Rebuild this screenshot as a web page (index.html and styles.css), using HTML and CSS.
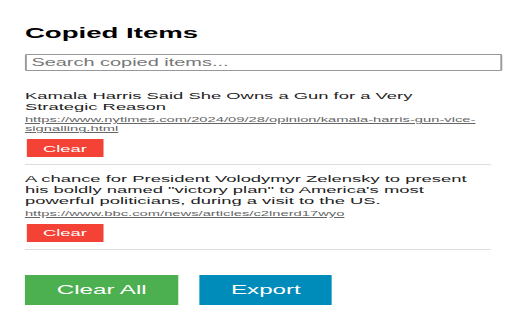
FILE: index.html
```html
<!DOCTYPE html>
<html lang="en">

<head>
    <meta charset="UTF-8">
    <meta name="viewport" content="width=device-width, initial-scale=1.0">
    <title>Copied Items</title>
    <link rel="stylesheet" href="styles.css">
</head>

<body>
    <div class="popup">
        <h2>Copied Items</h2>
        <input type="text" class="search" placeholder="Search copied items...">

        <div class="item-list">
            <div class="item">
                <div class="item-title">Kamala Harris Said She Owns a Gun for a Very Strategic Reason</div>
                <a class="item-url" href="#">https://www.nytimes.com/2024/09/28/opinion/kamala-harris-gun-vice-signalling.html</a>
                <button class="clear-btn">Clear</button>
            </div>
            <div class="item">
                <div class="item-title">A chance for President Volodymyr Zelensky to present his boldly named "victory plan" to America's most powerful politicians, during a visit to the US.</div>
                <a class="item-url" href="#">https://www.bbc.com/news/articles/c2lnerd17wyo</a>
                <button class="clear-btn">Clear</button>
            </div>
        </div>

        <div class="actions">
            <button class="action-btn clear-all">Clear All</button>
            <button class="action-btn export">Export</button>
        </div>
    </div>
</body>

</html>
```

FILE: styles.css
```css
* {
    box-sizing: border-box;
}

html,
body {
    margin: 0;
    padding: 0;
    overflow: hidden;
    background-color: #fff;
}

/* the screenshot is stretched sideways, so the popup is widened with scaleX */
.popup {
    width: 267px;
    padding: 25px 11px 0 13px;
    font-family: "Liberation Sans", Arial, sans-serif;
    font-size: 9.6px;
    color: #222;
    transform: scaleX(1.917);
    transform-origin: 0 0;
}

.popup h2 {
    margin: 0 0 13px;
    font-size: 14.4px;
    font-weight: bold;
    color: #000;
}

.search {
    display: block;
    width: calc(100% + 6px);
    margin: 0 0 11px;
    padding: 2px 2.4px;
    border: 1px solid #999;
    border-radius: 1px;
    font-family: inherit;
    font-size: 10.4px;
    line-height: normal;
}

.search::placeholder {
    color: #777;
}

.item {
    padding: 8px 0 6.6px;
    border-bottom: 1px solid #ddd;
}

.item-title {
    padding-right: 5px;
    color: #222;
}

.item-url {
    display: block;
    margin-top: 3px;
    font-size: 7.7px;
    color: #666;
}

.clear-btn {
    display: block;
    margin: 6px 0 0 1px;
    padding: 3.6px 8.4px;
    border: none;
    background-color: #f44336;
    color: #fff;
    font-family: inherit;
    font-size: 9.6px;
    line-height: normal;
}

.actions {
    display: flex;
    column-gap: 10.8px;
    margin-top: 25px;
}

.action-btn {
    padding: 8.2px 16.6px;
    border: none;
    color: #fff;
    font-family: inherit;
    font-size: 12.6px;
    line-height: normal;
}

.clear-all {
    background-color: #4caf50;
}

.export {
    background-color: #008cba;
}
```
